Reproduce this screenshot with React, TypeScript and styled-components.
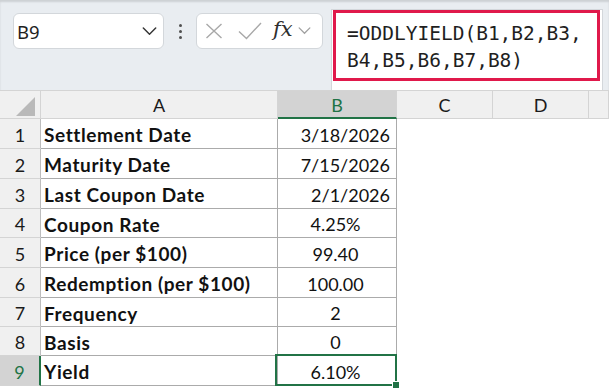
import React from "react";
import styled, { createGlobalStyle } from "styled-components";

const GlobalStyle = createGlobalStyle`
  html, body {
    margin: 0;
    padding: 0;
    background: #ffffff;
  }
  body {
    font-family: Lato, "Liberation Sans", sans-serif;
  }
`;

type Align = "left" | "center" | "right";

const rows: { label: string; value: string; align: Align; h: number }[] = [
  { label: "Settlement Date", value: "3/18/2026", align: "right", h: 30 },
  { label: "Maturity Date", value: "7/15/2026", align: "right", h: 30 },
  { label: "Last Coupon Date", value: "2/1/2026", align: "right", h: 30 },
  { label: "Coupon Rate", value: "4.25%", align: "center", h: 29 },
  { label: "Price (per $100)", value: "99.40", align: "center", h: 30 },
  { label: "Redemption (per $100)", value: "100.00", align: "center", h: 30 },
  { label: "Frequency", value: "2", align: "center", h: 29 },
  { label: "Basis", value: "0", align: "center", h: 29 },
  { label: "Yield", value: "6.10%", align: "center", h: 30 },
];

const columns = ["A", "B", "C", "D", ""];
const green = "#217346";

const Page = styled.div`
  width: 609px;
  height: 388px;
  overflow: hidden;
  background: #ffffff;
`;

/* formula bar area */

const Toolbar = styled.div`
  height: 90px;
  box-sizing: border-box;
  padding: 13px 6px 0 13px;
  display: flex;
  align-items: flex-start;
  background: #e9edf1;
  box-shadow: inset 0 2px 2px rgba(0, 0, 0, 0.12);
`;

const NameBox = styled.div`
  width: 151px;
  height: 36px;
  box-sizing: border-box;
  display: flex;
  align-items: center;
  justify-content: space-between;
  padding: 0 6px 0 3px;
  background: #ffffff;
  border: 1px solid #d3d7db;
  border-radius: 6px;
  font-family: "Noto Sans", "Open Sans", sans-serif;
  font-size: 18.5px;
  color: #1f1f1f;
`;

const Dots = styled.div`
  width: 32px;
  height: 36px;
  display: flex;
  flex-direction: column;
  align-items: center;
  justify-content: center;
  gap: 3px;

  span {
    width: 3px;
    height: 3px;
    border-radius: 50%;
    background: #505050;
  }
`;

const FxBox = styled.div`
  width: 127px;
  height: 36px;
  box-sizing: border-box;
  display: flex;
  align-items: center;
  padding: 0 4px 0 8px;
  background: #ffffff;
  border: 1px solid #d3d7db;
  border-radius: 6px;
`;

const FxLabel = styled.span`
  font-family: "DejaVu Serif", "Liberation Serif", serif;
  font-style: italic;
  font-size: 21px;
  color: #2e2e2e;
  margin: -4px 5px 0 11px;
`;

const FormulaBox = styled.div`
  margin: -4px 0 0 8px;
  height: 81px;
  flex: 1;
  box-sizing: border-box;
  background: #ffffff;
  border: 1px solid #d3d7db;
  border-bottom: none;
`;

const Highlight = styled.div`
  margin-left: 1px;
  width: 267px;
  height: 71px;
  box-sizing: border-box;
  border: 3px solid #e0194b;
  padding: 7px 0 0 11px;
  font-family: "DejaVu Sans Mono", "Liberation Mono", monospace;
  font-size: 19.5px;
  line-height: 27px;
  color: #1f1f1f;
  white-space: pre;
`;

/* sheet grid */

const Sheet = styled.div<{ $rows: string }>`
  display: grid;
  grid-template-columns: 41px 237px 119px 96px 96px 1fr;
  grid-template-rows: 28px ${({ $rows }) => $rows};
  border-top: 1px solid #d4d4d4;
`;

const Corner = styled.div`
  position: relative;
  background: #f0f0f0;
  border-right: 1px solid #d4d4d4;
  border-bottom: 1px solid #d4d4d4;

  &::after {
    content: "";
    position: absolute;
    right: 5px;
    bottom: 2px;
    border-style: solid;
    border-width: 0 0 19px 19px;
    border-color: transparent transparent #b9b9b9 transparent;
  }
`;

const ColHeader = styled.div<{ $active?: boolean }>`
  display: flex;
  align-items: center;
  justify-content: center;
  padding-top: 1px;
  box-sizing: border-box;
  background: ${({ $active }) => ($active ? "#d3d3d3" : "#f0f0f0")};
  color: ${({ $active }) => ($active ? green : "#1a1a1a")};
  border-right: 1px solid #d4d4d4;
  border-bottom: ${({ $active }) =>
    $active ? `2px solid ${green}` : "1px solid #d4d4d4"};
  font-size: 18px;
`;

const RowHeader = styled.div<{ $active?: boolean }>`
  display: flex;
  align-items: center;
  justify-content: center;
  padding-top: 2px;
  box-sizing: border-box;
  background: ${({ $active }) => ($active ? "#d3d3d3" : "#f0f0f0")};
  color: ${({ $active }) => ($active ? green : "#1a1a1a")};
  border-bottom: 1px solid #d4d4d4;
  border-right: ${({ $active }) =>
    $active ? `2px solid ${green}` : "1px solid #bdbdbd"};
  font-size: 18px;
`;

const Cell = styled.div<{ $align?: Align; $bold?: boolean; $selected?: boolean }>`
  position: relative;
  display: flex;
  align-items: center;
  padding: 2px 6px 0 3px;
  box-sizing: border-box;
  justify-content: ${({ $align }) =>
    $align === "right" ? "flex-end" : $align === "center" ? "center" : "flex-start"};
  border-right: 1px solid #ababab;
  border-bottom: 1px solid #ababab;
  font-size: ${({ $bold }) => ($bold ? "19px" : "18px")};
  letter-spacing: ${({ $bold }) => ($bold ? "0.6px" : "0")};
  font-weight: ${({ $bold }) => ($bold ? 700 : 400)};
  color: #111111;
  white-space: nowrap;

  ${({ $selected }) =>
    $selected &&
    `
    &::before {
      content: "";
      position: absolute;
      top: -2px;
      left: -3px;
      right: -1px;
      bottom: -1px;
      border: 2px solid ${green};
    }
    &::after {
      content: "";
      position: absolute;
      right: -4px;
      bottom: -4px;
      width: 6px;
      height: 6px;
      background: ${green};
      border: 1px solid #ffffff;
    }
  `}
`;

const Empty = styled.div``;

const Chevron = ({ color, size }: { color: string; size: number }) => (
  <svg width={size} height={size * 0.55} viewBox="0 0 14 8" fill="none">
    <path d="M1 1l6 6 6-6" stroke={color} strokeWidth="1.4" strokeLinecap="round" />
  </svg>
);

const CancelIcon = () => (
  <svg width="18" height="18" viewBox="0 0 18 18" fill="none">
    <path d="M1.5 2l15 14M16.5 2l-15 14" stroke="#a8a8a8" strokeWidth="1.4" />
  </svg>
);

const EnterIcon = () => (
  <svg width="24" height="18" viewBox="0 0 24 18" fill="none" style={{ marginLeft: 15 }}>
    <path d="M1 9.5l7.5 7L23 1" stroke="#a8a8a8" strokeWidth="1.4" />
  </svg>
);

const App = () => {
  const rowHeights = rows.map((r) => `${r.h}px`).join(" ");
  return (
    <Page>
      <GlobalStyle />
      <Toolbar>
        <NameBox>
          <span>B9</span>
          <Chevron color="#333" size={15} />
        </NameBox>
        <Dots>
          <span />
          <span />
          <span />
        </Dots>
        <FxBox>
          <CancelIcon />
          <EnterIcon />
          <FxLabel>fx</FxLabel>
          <Chevron color="#a0a0a0" size={13} />
        </FxBox>
        <FormulaBox>
          <Highlight>{"=ODDLYIELD(B1,B2,B3,\nB4,B5,B6,B7,B8)"}</Highlight>
        </FormulaBox>
      </Toolbar>

      <Sheet $rows={rowHeights}>
        <Corner />
        {columns.map((c, i) => (
          <ColHeader key={i} $active={c === "B"}>
            {c}
          </ColHeader>
        ))}
        {rows.map((r, i) => (
          <React.Fragment key={r.label}>
            <RowHeader $active={i === 8}>{i + 1}</RowHeader>
            <Cell $bold>{r.label}</Cell>
            <Cell $align={r.align} $selected={i === 8}>
              {r.value}
            </Cell>
            <Empty />
            <Empty />
            <Empty />
          </React.Fragment>
        ))}
      </Sheet>
    </Page>
  );
};

export default App;
